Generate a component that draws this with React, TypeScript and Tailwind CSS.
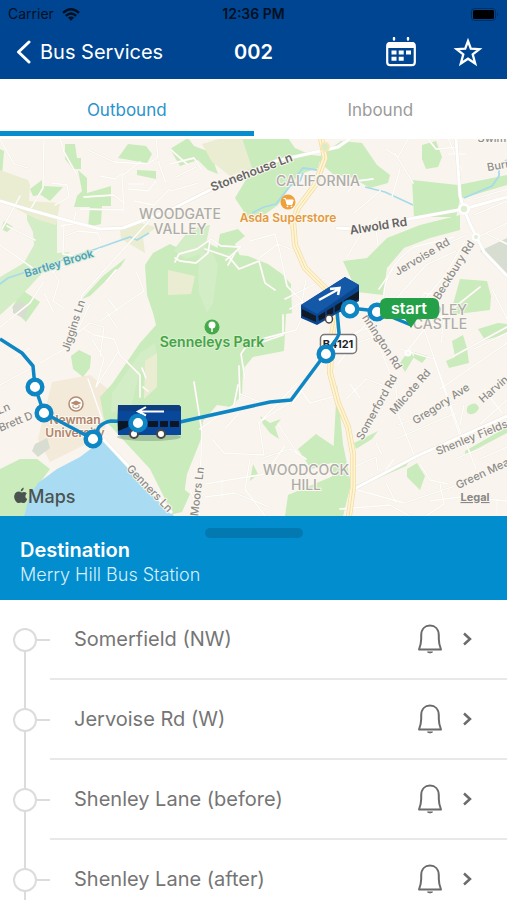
import { useState } from "react";

const STOPS = ["Somerfield (NW)", "Jervoise Rd (W)", "Shenley Lane (before)", "Shenley Lane (after)"];

const GREENS = [
  "M65 5h10l2 14h4v11h-8l-8-10z",
  "M128 5l18 2 6 8-5 9-29-5z",
  "M137 31l19 1v8l-19-4z",
  "M78 31l9 8v15l24-7v20h-9l-1 18-13 3 2-20H74l3-11 5-5z",
  "M30 50l12-9 2 6 19 1-13 14-9-6-8 1z",
  "M0 10l4 2-2 24-2 2z",
  "M4 82l9 6-6 5-6-3z",
  "M22 151l18 12-14 20-14-14z",
  "M82 160l8-3 31-30 5-8-23 18z",
  "M225 -1h63l7 10 16 7 10 1-3 12-20 7-20 30-14 10-16 3-13-20 16-27-20-6z",
  "M170 10l18-11 6 8 16 6 8 22-10-4-10-10-18 6z",
  "M316 20l25-18 21 2 15 22 13 10-2 8-18 5-17-10-20-4z",
  "M422 6l14-4 6 16-4 10-12 2-4-10z",
  "M412 41l46 5 49-10v10l-47 14-4 18h-42z",
  "M460 76v15l-30 8-26 10-17 20-4 27-26-3-14-31 24-3 20-20 33-13z",
  "M460 140l27 2 4 15-1 14-40 5z",
  "M220 95l18-5 7 7-10 8 5 12-13-3-10-2z",
  "M170 105l-17 9-8 12 2 30 6 18 3 12-16 18-28 41-12 13 4 22 46 50 20 40h12l5-35 14-35 2-18 14-16 14 2 11-12 1-26 10-12 31-6 2-37 6-1-1-29-9-10-14-10-20-8-18-2-20-10-12-8-11-3-11 14z",
  "M0 330l20-10h17l13 10-20 27-6 20H0z",
  "M71 217l8-6 12 6-1 12-7 9-10-8z",
  "M298 310l18-15 22 15v12l-27 8z",
  "M260 277l10 7 11-4-6 8 4 12-9-6-7-9z",
  "M285 377l3-21 50-21 8 12-3 30z",
  "M337 245l6 60 8 40-8 32h-14l3-40z",
  "M253 325l5 10-8 7z",
  "M452 202l11-6 4 13 2 15-20 5-3-7 9-4z",
  "M400 224l9-13 5 7-9 15z",
  "M414 213l14 4-6 7-8-5z",
  "M468 267q8-6 11 2-3 7-10 6-4-3-1-8z",
  "M407 330l10-6 8 13-5 14-13-13z",
  "M355 347l55-26-4 6-50 22z",
  "M354 304l24-12-6 8-16 10z",
  "M465 312l42-24v6l-42 22z",
  "M478 190l20-6 9 1v10l-22 6z",
  "M168 349l12-2 10 8-8 18-12 3z",
];

const PALE = [
  "M27 74l30 8v32l13-1-24 17-26 28-20 18v-38l24-14 10-18-1-13-6-12z",
  "M200 114l12-2 6 14-5 38-6 10-8-20-1-22z",
  "M190 90l20-4-6 28-18 6-12-8z",
  "M112 254l28-40 15-10 2 15-18 17-8 32-20 6z",
];

const OLIVE = [
  "M0 31l28 10 2 5-1 16 31 2-4 22-20-6-36-19z",
  "M120 91l20-7 17 4-14 10 2 16-24-14z",
  "M202 5l20-6h20l10 30-22 8-18-14z",
  "M168 131l27 6-4 18-23 1z",
  "M145 222l12-8v34l-13 12z",
];

const LANES = [
  "M44 -1l-1 50-13 22M0 106l34 24M35 101l-28-14M20 57L2 90M0 0l14 25 14 4M60 -1l4 14 13 23M52 44l15 2 2 12-14 8",
  "M76 73l-3 12-13 2M80 70l44 1M84 58l30-2 10 8M64 85l-1 30 26 5M66 97l12-5 20 2 3 9",
  "M88 11l26 12 34 2 10-7-2-19M124 70l-2-33 18-14M128 50l20 2 8-10M128 45h16M158 22l8 22M100 37l15 3 8-6",
  "M170 10l18 16M170 25l24-6 8 12M176 38l20-10M170 52l28-8M134 62l20 4 16-16",
  "M150 81l-40 44-28 31-10 36M100 110l-10 6-38 17M106 143l10-12M100 182l44-30-8-20M108 160l10 12M118 190l-12-18M51 130l8 12-6 20 12 8",
  "M0 188l30-24 14-22M44 154l10 20M40 224l30-17 20-42M70 200l20-16 14 4-4 30M84 190l10 6 20 4 6 16 20 20v22",
  "M92 200l12 20-8 28 22-35M0 246l30-16M30 209l-16 10M102 280l-14-40M146 239l-4-10M148 252l-5-4",
  "M175 123l4-8 18-5 14-10 10 7 20 1-15 13M210 102l-2 12-12 10-16-2-5-3M205 110l24 8 10 12 20-8 6 22 10 7M236 112l-8 14M250 102l25-7 4 14 8 38 20 20M258 120l20-15 14 6",
  "M285 160l40-20M290 170l12-7 4-22M283 176v20l-38 13M245 240l-4-25 4-6M262 200l34-9 8-16",
  "M194 243l8 50-2 48M240 262l-1-35M200 290l34-24 4-20M212 300l12 14 40 2-5-32 40-42M258 284l40-26 8-20M240 255l20 8M278 285l20 30M225 290l14-16M250 320l-5 30 20 27",
  "M205 345l60-10 20-28M205 358l30-4 34 14M222 340v20M190 350l10 27M260 320l30-10 16 10M300 250l10 14 28-8M305 247l-14 20",
  "M337 226l16-20 20-8M346 260l20-20 16 6M350 245l10 14M345 200l30-15M366 189l14 20 16 40 2 26 18 46",
  "M380 160l-12 8-4 20-20 14M384 170q-4-40 30-62l40-10M393 130l-14 20M400 210l34 10 28 84M408 211l8-10 20-26M430 175l14 3-3 26",
  "M396 160l30-34 30-14M425 160l20-24 20-34M380 52l-26 22M347 54l10-12 16-2M400 30l-8 28M386 10l12 8 10-18M395 14l18 30M346 120l20-34 12-8M376 90l2 16",
  "M428 0l8 10 24-2M448 15h18M448 -1l14 32M474 60l33-10M474 76l33-14M472 101l35-17M487 95l20 10M436 110l30-14M414 170l10-16 14 2M492 150l15 30",
  "M430 188l50-40M474 210l33-16M452 218l55-30M440 250l67-46M398 286l60-22M396 300l60-26M424 190l40 114M394 320l-9 12M386 344l10 20M354 350l50 14 60-20M420 325l10 16 18 4M466 304l10 26M350 330l26-12 2 14M376 304l6 12",
  "M440 345l4 20-18 12M430 362l30-4 47 4M455 320l30-12M480 320l27-12M480 285l27-24M484 250l18 24M460 286l4-20M340 370l50-4 20 11M497 360v17",
];

const MID_ROADS = [
  "M0 62l30 9 43 12 27 7 23-1 47-18 52-26 54-23 62-14 20-14",
  "M337 89l17 1 110-20 43-12",
  "M456 -1l4 58 4 13 6 15 14 28 23 24",
  "M354 350l63-33 90-40",
  "M103 300l68 73",
];

const GREY = [
  "M480 112l27-13v39z",
  "M35 305l12-6 3 10-12 9-6-6z",
  "M13 167l8-5 7 6-3 12-12-6z",
];

const MAIN_ROAD = "M321 -1l4 20-10 27-17 23-5 13 2 24 10 23 20 20 12 21-5 26-2 38 8 30 10 24 5 27v33l-5 37";

const ROUTE_STOPS: [number, number][] = [[35, 248], [44, 274], [93, 300], [326, 215], [350, 170], [377, 173]];

const STREETS = [
  { text: "Stonehouse Ln", x: 253, y: 37, r: -21, bold: true },
  { text: "Alwold Rd", x: 379, y: 91, r: -9, bold: true },
  { text: "Jervoise Rd", x: 424, y: 121, r: -31 },
  { text: "Beckbury Rd", x: 457, y: 133, r: -58 },
  { text: "Jiggins Ln", x: 77, y: 188, r: -72 },
  { text: "Brett D", x: 17, y: 286, r: -22 },
  { text: "Ln", x: 5, y: 273, r: -22 },
  { text: "Genners Ln", x: 147, y: 352, r: 46 },
  { text: "Moors Ln", x: 201, y: 353, r: -83 },
  { text: "nnington Rd", x: 379, y: 205, r: 57 },
  { text: "Somerford Rd", x: 380, y: 270, r: -61 },
  { text: "Milcote Rd", x: 413, y: 255, r: -49 },
  { text: "Gregory Ave", x: 443, y: 268, r: -33 },
  { text: "Harvin", x: 496, y: 253, r: -41 },
  { text: "Shenley Fields", x: 473, y: 302, r: -22 },
  { text: "Green Mea", x: 484, y: 338, r: -25 },
  { text: "Burn", x: 500, y: 30, r: -10 },
  { text: "Swim", x: 492, y: 3, r: 0 },
];

const AREAS = [
  { text: "CALIFORNIA", x: 318, y: 47 },
  { text: "WOODGATE", x: 180, y: 80 },
  { text: "VALLEY", x: 180, y: 95 },
  { text: "DLEY", x: 449, y: 176 },
  { text: "CASTLE", x: 440, y: 190 },
  { text: "WOODCOCK", x: 306, y: 336 },
  { text: "HILL", x: 306, y: 351 },
];

function StatusBar() {
  return (
    <div className="grid grid-cols-3 items-center px-2 h-7 text-sm leading-5 text-[#04101f]">
      <span className="flex items-center gap-2">
        Carrier
        <svg viewBox="0 0 18 13" className="w-[18px] h-[13px]" fill="none" stroke="currentColor">
          <path d="M1 4.8Q9-2.2 17 4.8" strokeWidth="2.4" />
          <path d="M3.8 7.8Q9 3.2 14.2 7.8" strokeWidth="2.3" />
          <path d="M9 12.8L5.8 9.6Q9 7.2 12.2 9.6z" fill="currentColor" stroke="none" />
        </svg>
      </span>
      <span className="text-center font-semibold">12:36 PM</span>
      <svg viewBox="0 0 28 13" className="w-7 h-[13px] justify-self-end">
        <rect x="0.5" y="0.5" width="24" height="12" rx="3" fill="none" stroke="#04101f" strokeOpacity="0.4" />
        <rect x="2" y="2" width="21" height="9" rx="1.5" fill="#000" />
        <path d="M26 4.5q2 2 0 4z" fill="#04101f" fillOpacity="0.5" />
      </svg>
    </div>
  );
}

function NavBar() {
  return (
    <div className="grid grid-cols-[1fr_auto_1fr] items-center px-4 pb-1 h-[51px] text-white">
      <button className="flex items-center gap-2 text-xl font-normal">
        <svg viewBox="0 0 16 24" className="w-4 h-6" fill="none" stroke="currentColor" strokeWidth="3" strokeLinecap="round" strokeLinejoin="round">
          <path d="M13 2L2.500 12 13 22" />
        </svg>
        Bus Services
      </button>
      <h1 className="text-xl font-semibold">002</h1>
      <div className="flex items-center justify-end gap-9 pr-2">
        <button aria-label="Timetable">
          <svg viewBox="0 0 32 30" className="w-8 h-[30px]">
            <rect x="2.200" y="6.200" width="27.600" height="22" rx="3" fill="none" stroke="#fff" strokeWidth="2.200" />
            <path d="M2 11V8q0-3 3-3h22q3 0 3 3v3z" fill="#fff" />
            <path d="M9 1v1.500M23 1v1.500" stroke="#fff" strokeWidth="2.400" strokeLinecap="round" />
            <path d="M6.500 13.500h5v4h-5zM13.700 13.500h5v4h-5zM21 13.500h5v4h-5zM6.500 19.800h5v4h-5zM13.700 19.800h5v4h-5z" fill="#fff" />
          </svg>
        </button>
        <button aria-label="Favourite">
          <svg viewBox="0 0 30 30" className="w-[30px] h-[30px]" fill="none" stroke="currentColor" strokeWidth="2.300" strokeLinejoin="miter">
            <path d="M15 4l2.800 7.600 8.600.5-6.700 5.300 2.500 9.100-7.200-4.800-7.200 4.800 2.500-9.100-6.700-5.300 8.600-.5z" />
          </svg>
        </button>
      </div>
    </div>
  );
}

function RouteMap() {
  return (
    <svg viewBox="0 0 507 377" className="block w-full h-auto shrink-0" role="img" aria-label="Route map">
      <rect width="507" height="377" fill="#f9f5ee" />
      <path d="M52 243l38-7 18 14-3 41-15 12-40 20-12-23z" fill="#f4ead9" />
      {GREENS.map((d) => <path key={d} d={d} fill="#caebbc" />)}
      {PALE.map((d) => <path key={d} d={d} fill="#d3edc6" />)}
      {OLIVE.map((d) => <path key={d} d={d} fill="#ebedd2" />)}
      {GREY.map((d) => <path key={d} d={d} fill="#d8ddd2" />)}
      <path d="M104 300L80 318l-23 12-19 14-9 14-5 19h150z" fill="#a9dcf3" />

      <g fill="none" stroke="#a7dbea" strokeWidth="1.800">
        <path d="M0 145l8-6 15-5 70-23 37-13 7 3 12-7" />
        <path d="M252 74l12-6 12-3 14-18 10-5 3-8M297 36l6-7 14 2" />
        <path d="M365 48l20 5 28 13M464 59l28-12 7-10 0-10 8-6" />
      </g>

      <g fill="none" strokeLinejoin="round" strokeLinecap="round">
        {LANES.map((d) => <path key={d} d={d} stroke="#efebe3" strokeWidth="2" />)}
        {LANES.map((d) => <path key={d} d={d} stroke="#fffefb" strokeWidth="1.300" />)}
        {MID_ROADS.map((d) => <path key={d} d={d} stroke="#e9e6de" strokeWidth="3.800" />)}
        {MID_ROADS.map((d) => <path key={d} d={d} stroke="#fff" strokeWidth="3" />)}
        <path d={MAIN_ROAD} stroke="#f3dca4" strokeWidth="6" />
        <path d={MAIN_ROAD} stroke="#fff5d5" strokeWidth="4.500" />
        <path d={MAIN_ROAD} stroke="#f3dfa5" strokeWidth="1" />
        <circle cx="464" cy="70" r="4.500" fill="#dfeed3" stroke="#fff" strokeWidth="2.500" />
        <circle cx="476" cy="98" r="3" fill="#dfeed3" stroke="#fff" strokeWidth="2" />
        <circle cx="325" cy="8" r="4" fill="#d7edc7" stroke="#f8e7b5" strokeWidth="2" />
        <circle cx="408" cy="214" r="2.500" fill="#f9f5ee" stroke="#fff" strokeWidth="2" />
      </g>

      <g textAnchor="middle" stroke="#fbf8f2" strokeWidth="2" strokeLinejoin="round" paintOrder="stroke">
        <g className="text-[14px] font-medium" fill="#aeaca8">
          {AREAS.map((a) => <text key={a.text} x={a.x} y={a.y}>{a.text}</text>)}
        </g>
        {STREETS.map((s) => (
          <text
            key={s.text}
            className={s.bold ? "text-[12px] font-semibold" : "text-[11px] font-medium"}
            fill={s.bold ? "#666463" : "#8f8c89"}
            transform={`translate(${s.x} ${s.y}) rotate(${s.r})`}
          >
            {s.text}
          </text>
        ))}
        <text className="text-[11px] font-semibold" fill="#4f9fbd" stroke="#d9eed2" transform="translate(60 128) rotate(-17)">Bartley Brook</text>
        <text className="text-[12px] font-semibold" fill="#e39a3c" x="288" y="83">Asda Superstore</text>
        <text className="text-[14px] font-semibold" fill="#46a346" stroke="#d9f0cf" x="212" y="208">Senneleys Park</text>
        <text className="text-[12px] font-semibold" fill="#b08468" x="75" y="285">Newman</text>
        <text className="text-[12px] font-semibold" fill="#b08468" x="75" y="298">University</text>
      </g>

      <circle cx="288" cy="63" r="7.500" fill="#f0a13c" />
      <path d="M283.500 59.500h2l1.500 6h5l1.200-4.500h-7" fill="#fff" stroke="#fff" strokeWidth="1" />
      <circle cx="287.500" cy="67.300" r="0.900" fill="#fff" /><circle cx="291.500" cy="67.300" r="0.900" fill="#fff" />
      <circle cx="212" cy="188" r="7.500" fill="#46aa4c" />
      <circle cx="212" cy="186" r="3.500" fill="#fff" /><path d="M212 186v7" stroke="#fff" strokeWidth="1.500" />
      <circle cx="76" cy="265" r="7" fill="#fff" stroke="#b58b70" strokeWidth="1.500" />
      <path d="M70.500 264l5.500-2.500 5.500 2.500-5.500 2.500z" fill="#b58b70" /><path d="M73 266v2.500q3 1.500 6 0V266" fill="none" stroke="#b58b70" />

      <rect x="320.500" y="195.500" width="36" height="19" rx="4" fill="#fff" stroke="#777" strokeWidth="1.500" />
      <text x="338" y="209" textAnchor="middle" className="text-[11px] font-bold" fill="#222">B4121</text>

      <path d="M0 200l22 14 11 13 2 21 9 26 49 26 6-12q5-5 12-6l28 1 41 0 90-20 21-2 35-47q13-16 13-20l-2-22 13-3 27 3 34 14" fill="none" stroke="#0f86c4" strokeWidth="3.500" strokeLinejoin="round" />

      {/* westbound bus, side view */}
      <ellipse cx="149" cy="298" rx="32" ry="4" fill="#31503c" fillOpacity="0.250" />
      <path d="M118 266h61l2 2v28h-63q-1-16 0-30z" fill="#08479a" />
      <path d="M118 266h61l2 2v4h-63z" fill="#0d3f80" />
      <path d="M118 282h10v6l-10 4zM130 282h8v6h-8zM148 282h10v6h-10zM160 282h8v6h-8zM170 282h9v6h-9z" fill="#0b1726" />
      <circle cx="134" cy="295" r="4" fill="#fff" stroke="#4a4542" strokeWidth="2" />
      <circle cx="161" cy="295" r="4" fill="#fff" stroke="#4a4542" strokeWidth="2" />
      <path d="M164 272.500h-26M146 268l-8 4.500 8 4" fill="none" stroke="#fff" strokeWidth="2" />
      <circle cx="138" cy="284" r="7.300" fill="#fff" stroke="#0f86c4" strokeWidth="4.500" />

      {/* bus turning north-east */}
      <path d="M301 166l44-28 14 8v16l-42 24-16-7z" fill="#0b4690" />
      <path d="M301 166l44-28 14 8-42 29z" fill="#1458a8" />
      <path d="M302 170l14 7v6l-14-6zM318 177l41-25v8l-40 22z" fill="#111b28" />
      <path d="M326 171v8M334 166v8M343 161v8" stroke="#0b4690" strokeWidth="1.500" />
      <ellipse cx="329" cy="180" rx="3.500" ry="4" fill="#fff" stroke="#4a4542" strokeWidth="1.500" />
      <path d="M319 161l20-11M330 150l9.500-1-1.500 7" fill="none" stroke="#fff" strokeWidth="2.500" />

      <g fill="#fff" stroke="#0f86c4" strokeWidth="4.500">
        {ROUTE_STOPS.map(([cx, cy]) => <circle key={cx} cx={cx} cy={cy} r="7.300" />)}
      </g>

      <path d="M405 180h12l-6 9z" fill="#24a148" />
      <rect x="380" y="159" width="59" height="21" rx="6" fill="#24a148" />
      <text x="409" y="175" textAnchor="middle" className="text-base font-semibold" fill="#fff">start</text>

      <path d="M21.500 353.500q-4-2.200-6.500 1-2 4 1 8 1.500 2 3 1.500 2-1 4 0 1.500.5 3-1.500l1.200-2.400q-3.500-2-.4-5.800-2-2.200-5.300-.8zM20.700 352.500q0-3 3-4 .2 3-3 4z" fill="#4b5350" />
      <text x="28" y="364" className="text-lg font-medium" fill="#4b5350">Maps</text>
      <a href="#legal">
        <text x="475" y="362" textAnchor="middle" className="text-[11px] font-bold underline" fill="#8a8886">Legal</text>
      </a>
    </svg>
  );
}

function StopRow({ name, first }: { name: string; first: boolean }) {
  return (
    <li className="flex h-20 shrink-0">
      <div className="relative flex w-[50px] shrink-0 items-center pl-[13px]">
        <span className={`absolute left-6 bottom-0 w-0.5 bg-[#dcdcdc] ${first ? "top-1/2" : "top-0"}`} />
        <span className="relative size-6 rounded-full border-2 border-[#dcdcdc] bg-white" />
        <span className="h-0.5 flex-1 bg-[#dcdcdc]" />
      </div>
      <div className="flex flex-1 items-center border-b-2 border-[#e8e8e8] pl-6 pr-8">
        <span className="flex-1 text-xl text-[#757575]">{name}</span>
        <button aria-label={`Set alert for ${name}`} className="mr-4">
          <svg viewBox="0 0 26 32" className="w-[26px] h-8" fill="none" stroke="#6b6b6b" strokeWidth="2" strokeLinejoin="round">
            <path d="M2 26.500Q4.200 21 4.200 16V12.500C4.200 6 8 2.500 13 2.500s8.800 3.500 8.800 10V16q0 5 2.200 10.500z" />
            <path d="M10.500 29q2.500 2 5 0z" fill="#6b6b6b" strokeWidth="1" />
          </svg>
        </button>
        <button aria-label={`Open ${name}`}>
          <svg viewBox="0 0 16 16" className="size-4" fill="none" stroke="#6b6b6b" strokeWidth="2.500">
            <path d="M5 2.500L11 8l-6 5.500" />
          </svg>
        </button>
      </div>
    </li>
  );
}

export default function App() {
  const [direction, setDirection] = useState("Outbound");

  return (
    <div className="flex h-screen flex-col overflow-hidden bg-white font-[Inter,sans-serif]">
      <header className="shrink-0 bg-[#004591]">
        <StatusBar />
        <NavBar />
      </header>

      <nav className="grid shrink-0 grid-cols-2 pb-[3px]">
        {["Outbound", "Inbound"].map((tab) => (
          <button
            key={tab}
            onClick={() => setDirection(tab)}
            className={`h-[57px] border-b-[5px] pt-3 text-[17px] ${
              direction === tab ? "border-[#058dcd] text-[#2b93cb]" : "border-transparent text-[#9b9b9b]"
            }`}
          >
            {tab}
          </button>
        ))}
      </nav>

      <RouteMap />

      <section className="relative shrink-0 bg-[#028dcf] px-5 pt-[22px] pb-3 text-white">
        <span className="absolute left-1/2 top-3 h-2.5 w-[98px] -translate-x-1/2 rounded-full bg-[#0379b1]" />
        <h2 className="text-xl leading-6 font-semibold">Destination</h2>
        <p className="text-lg leading-[26px] font-light text-[#d9effa]">Merry Hill Bus Station</p>
      </section>

      <ul className="flex flex-1 flex-col overflow-y-auto [scrollbar-width:none]">
        {STOPS.map((name, i) => <StopRow key={name} name={name} first={i === 0} />)}
      </ul>
    </div>
  );
}
